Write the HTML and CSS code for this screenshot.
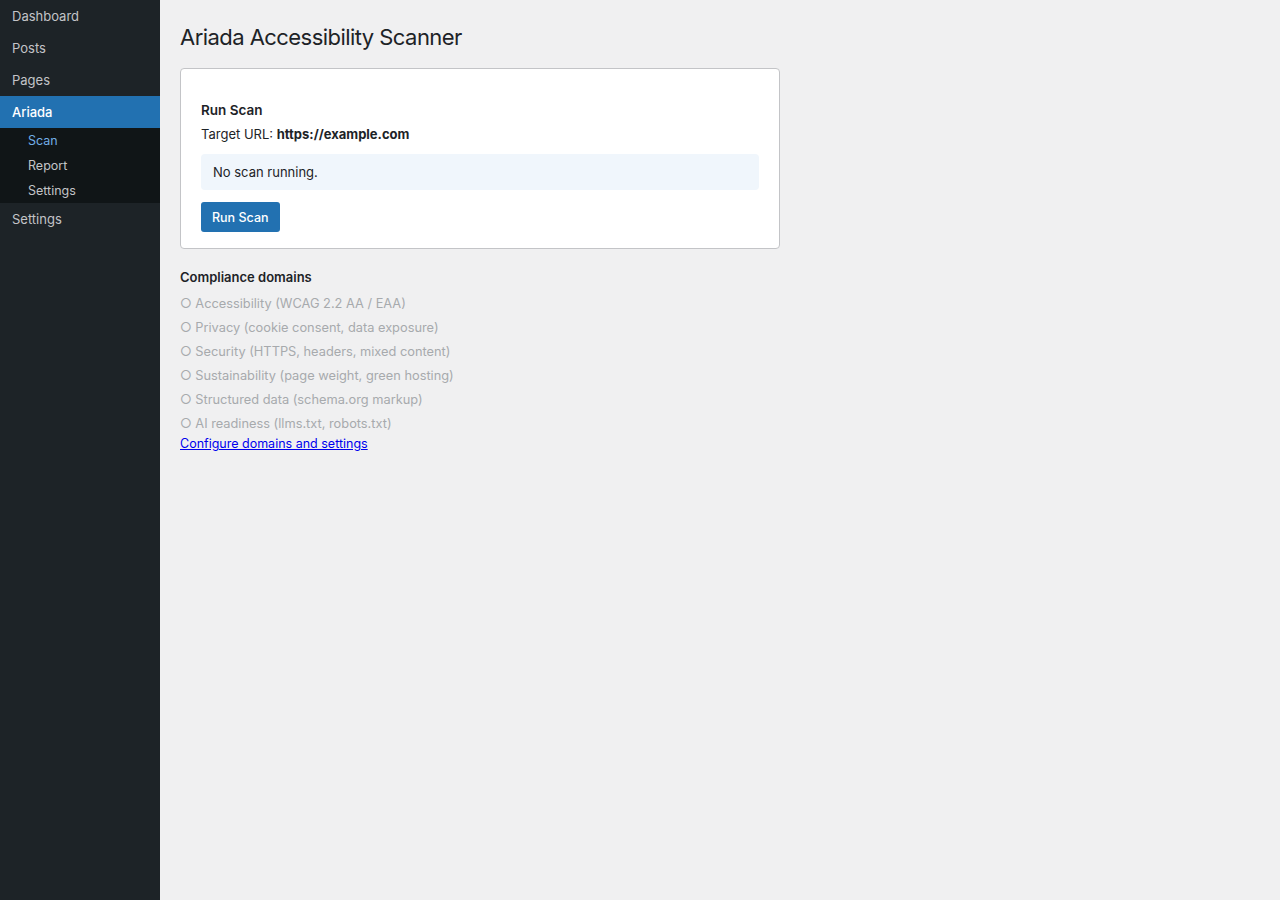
FILE: index.html
```html
<!DOCTYPE html>
<html lang="en">
<head>
    <meta charset="UTF-8">
    <meta name="viewport" content="width=device-width, initial-scale=1.0">
    <title>Ariada Accessibility Scanner</title>
    <link rel="stylesheet" href="styles.css">
</head>
<body>
    <div class="layout">
        <nav class="sidebar">
            <a class="menu-item" href="#">Dashboard</a>
            <a class="menu-item" href="#">Posts</a>
            <a class="menu-item" href="#">Pages</a>
            <a class="menu-item active" href="#">Ariada</a>
            <div class="submenu">
                <a class="sub-item current" href="#">Scan</a>
                <a class="sub-item" href="#">Report</a>
                <a class="sub-item" href="#">Settings</a>
            </div>
            <a class="menu-item" href="#">Settings</a>
        </nav>
        <main class="content">
            <h1>Ariada Accessibility Scanner</h1>
            <div class="card">
                <h2>Run Scan</h2>
                <p class="target">Target URL: <strong>https://example.com</strong></p>
                <div class="notice">No scan running.</div>
                <button class="btn-primary">Run Scan</button>
            </div>
            <h3>Compliance domains</h3>
            <ul class="domains">
                <li>○ Accessibility (WCAG 2.2 AA / EAA)</li>
                <li>○ Privacy (cookie consent, data exposure)</li>
                <li>○ Security (HTTPS, headers, mixed content)</li>
                <li>○ Sustainability (page weight, green hosting)</li>
                <li>○ Structured data (schema.org markup)</li>
                <li>○ AI readiness (llms.txt, robots.txt)</li>
            </ul>
            <a class="config-link" href="#">Configure domains and settings</a>
        </main>
    </div>
</body>
</html>
```

FILE: styles.css
```css
body {
    margin: 0;
    font-family: Inter, "Liberation Sans", sans-serif;
    background: #f0f0f1;
    color: #1d2327;
}
.layout {
    display: flex;
    min-height: 100vh;
}
.sidebar {
    width: 160px;
    flex-shrink: 0;
    background: #1d2327;
    display: flex;
    flex-direction: column;
}
.menu-item {
    display: block;
    height: 32px;
    line-height: 32px;
    padding: 0 12px;
    font-size: 13px;
    color: #c3c4c7;
    text-decoration: none;
}
.menu-item.active {
    background: #2271b1;
    color: #fff;
    font-weight: 500;
}
.submenu {
    background: #101517;
    display: flex;
    flex-direction: column;
}
.sub-item {
    display: block;
    height: 25px;
    line-height: 25px;
    padding: 0 28px;
    font-size: 12.5px;
    color: #c3c4c7;
    text-decoration: none;
}
.sub-item.current {
    color: #72aee6;
}
.content {
    flex: 1;
    padding: 0 20px;
}
h1 {
    font-size: 22px;
    font-weight: 400;
    letter-spacing: -0.55px;
    margin: 23px 0 17px;
    line-height: 28px;
}
.card {
    width: 558px;
    background: #fff;
    border: 1px solid #c3c4c7;
    border-radius: 4px;
    padding: 31px 20px 16px;
}
h2 {
    font-size: 13.5px;
    font-weight: 600;
    line-height: 20px;
    margin: 0;
}
.target {
    font-size: 13px;
    line-height: 20px;
    margin: 4px 0 0;
}
.target strong {
    font-weight: 700;
}
.notice {
    margin-top: 10px;
    background: #f0f6fc;
    border-radius: 4px;
    padding: 8px 12px;
    font-size: 13px;
    line-height: 20px;
}
.btn-primary {
    display: block;
    margin-top: 12px;
    height: 30px;
    padding: 0 11px;
    border: none;
    border-radius: 3px;
    background: #2271b1;
    color: #fff;
    font-family: inherit;
    font-size: 12.5px;
    font-weight: 500;
    cursor: pointer;
}
h3 {
    font-size: 13px;
    font-weight: 600;
    line-height: 20px;
    margin: 18px 0 5px;
}
.domains {
    list-style: none;
    margin: 0;
    padding: 0;
    color: #a7aaad;
    font-size: 12.8px;
}
.domains li {
    line-height: 24px;
}
.config-link {
    display: block;
    line-height: 16px;
    font-size: 12.5px;
    color: #0000ee;
}
```
